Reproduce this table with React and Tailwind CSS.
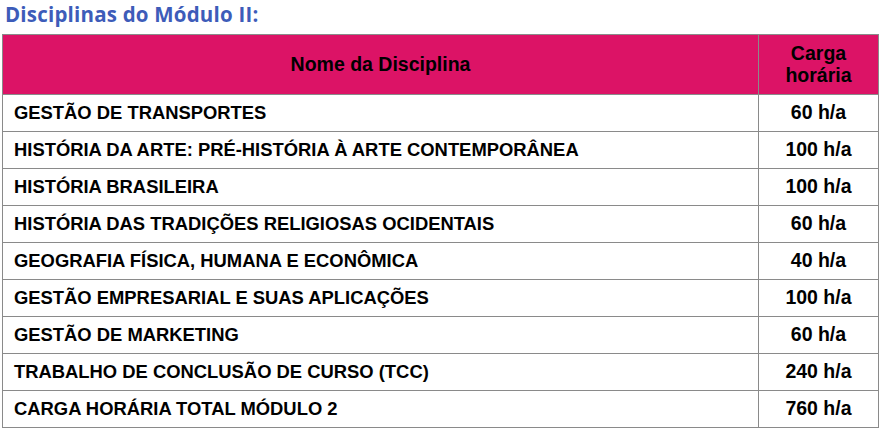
const rows = [
  ['GESTÃO DE TRANSPORTES', '60 h/a'],
  ['HISTÓRIA DA ARTE: PRÉ-HISTÓRIA À ARTE CONTEMPORÂNEA', '100 h/a'],
  ['HISTÓRIA BRASILEIRA', '100 h/a'],
  ['HISTÓRIA DAS TRADIÇÕES RELIGIOSAS OCIDENTAIS', '60 h/a'],
  ['GEOGRAFIA FÍSICA, HUMANA E ECONÔMICA', '40 h/a'],
  ['GESTÃO EMPRESARIAL E SUAS APLICAÇÕES', '100 h/a'],
  ['GESTÃO DE MARKETING', '60 h/a'],
  ['TRABALHO DE CONCLUSÃO DE CURSO (TCC)', '240 h/a'],
  ['CARGA HORÁRIA TOTAL MÓDULO 2', '760 h/a'],
];

export default function App() {
  return (
    <div className="w-[881px] h-[432px] bg-white overflow-hidden">
      <h2 className="pl-[5px] pt-[2px] h-[34px] text-[20.5px] leading-[24px] font-bold text-[#3d5cb9] tracking-[0.2px] font-['Open_Sans',sans-serif]">
        Disciplinas do Módulo II:
      </h2>
      <table className="ml-[2px] w-[877px] border-collapse font-['Liberation_Sans',Arial,sans-serif] text-black">
        <thead>
          <tr className="bg-[#dc1366] h-[60px]">
            <th className="border border-[#8a8a8a] text-[19.5px] font-bold text-center">Nome da Disciplina</th>
            <th className="border border-[#8a8a8a] w-[120px] text-[19.5px] leading-[22px] font-bold text-center pb-[2px]">Carga<br />horária</th>
          </tr>
        </thead>
        <tbody>
          {rows.map(([name, hours]) => (
            <tr key={name} className="h-[37px]">
              <td className="border border-[#8a8a8a] pl-[11px] text-[18.4px] font-bold">{name}</td>
              <td className="border border-[#8a8a8a] text-[19.5px] font-bold text-center">{hours}</td>
            </tr>
          ))}
        </tbody>
      </table>
    </div>
  );
}
